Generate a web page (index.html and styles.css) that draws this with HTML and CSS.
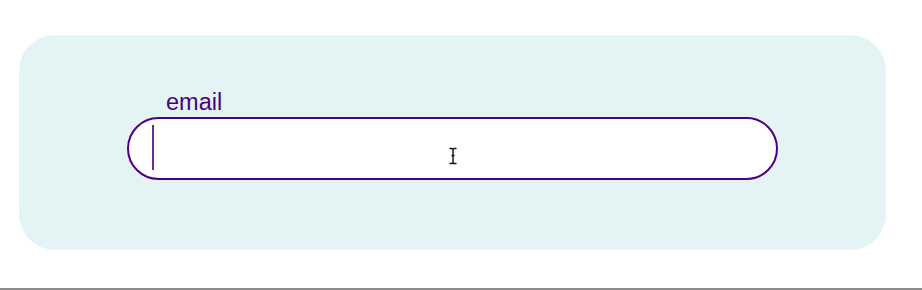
FILE: index.html
```html
<!DOCTYPE html>
<html lang="en">
<head>
<meta charset="utf-8">
<title>email</title>
<link rel="stylesheet" href="styles.css">
</head>
<body>
<div class="page">
  <div class="card">
    <div class="field">
      <label class="label">email</label>
      <div class="input">
        <span class="caret"></span>
        <svg class="ibeam" width="10" height="18" viewBox="0 0 10 18">
          <path d="M1.5 1.5h2.5l1 1 1-1h2.5M5 2.5v13M1.5 16.5h2.5l1-1 1 1h2.5M3.5 8.5h3" fill="none" stroke="#fff" stroke-width="2.8" stroke-linecap="round"/>
          <path d="M1.5 1.5h2.5l1 1 1-1h2.5M5 2.5v13M1.5 16.5h2.5l1-1 1 1h2.5M3.5 8.5h3" fill="none" stroke="#111" stroke-width="1.4"/>
        </svg>
      </div>
    </div>
  </div>
</div>
<div class="rule"></div>
</body>
</html>
```

FILE: styles.css
```css
html, body {
  margin: 0;
  padding: 0;
  background: #ffffff;
}

body {
  font-family: "Liberation Sans", Arial, sans-serif;
  width: 922px;
  height: 290px;
  overflow: hidden;
}

.page {
  height: 288px;
  box-sizing: border-box;
  padding: 35px 36px 0 19px;
}

.card {
  height: 215px;
  background: #e4f4f4;
  border-radius: 36px;
  box-sizing: border-box;
  padding: 55px 0 0 108px;
}

.field {
  display: flex;
  flex-direction: column;
  width: 651px;
}

.label {
  color: #4b0082;
  font-size: 23.5px;
  line-height: 24px;
  margin-left: 39px;
  height: 27px;
}

.input {
  position: relative;
  height: 63px;
  box-sizing: border-box;
  border: 2px solid #4b0082;
  border-radius: 32px;
  background: #ffffff;
}

.caret {
  position: absolute;
  left: 23px;
  top: 6px;
  width: 1.5px;
  height: 45px;
  background: #6a2aa0;
}

.ibeam {
  position: absolute;
  left: 319px;
  top: 28px;
}

.rule {
  height: 2px;
  background: #8c8c8c;
}
```
